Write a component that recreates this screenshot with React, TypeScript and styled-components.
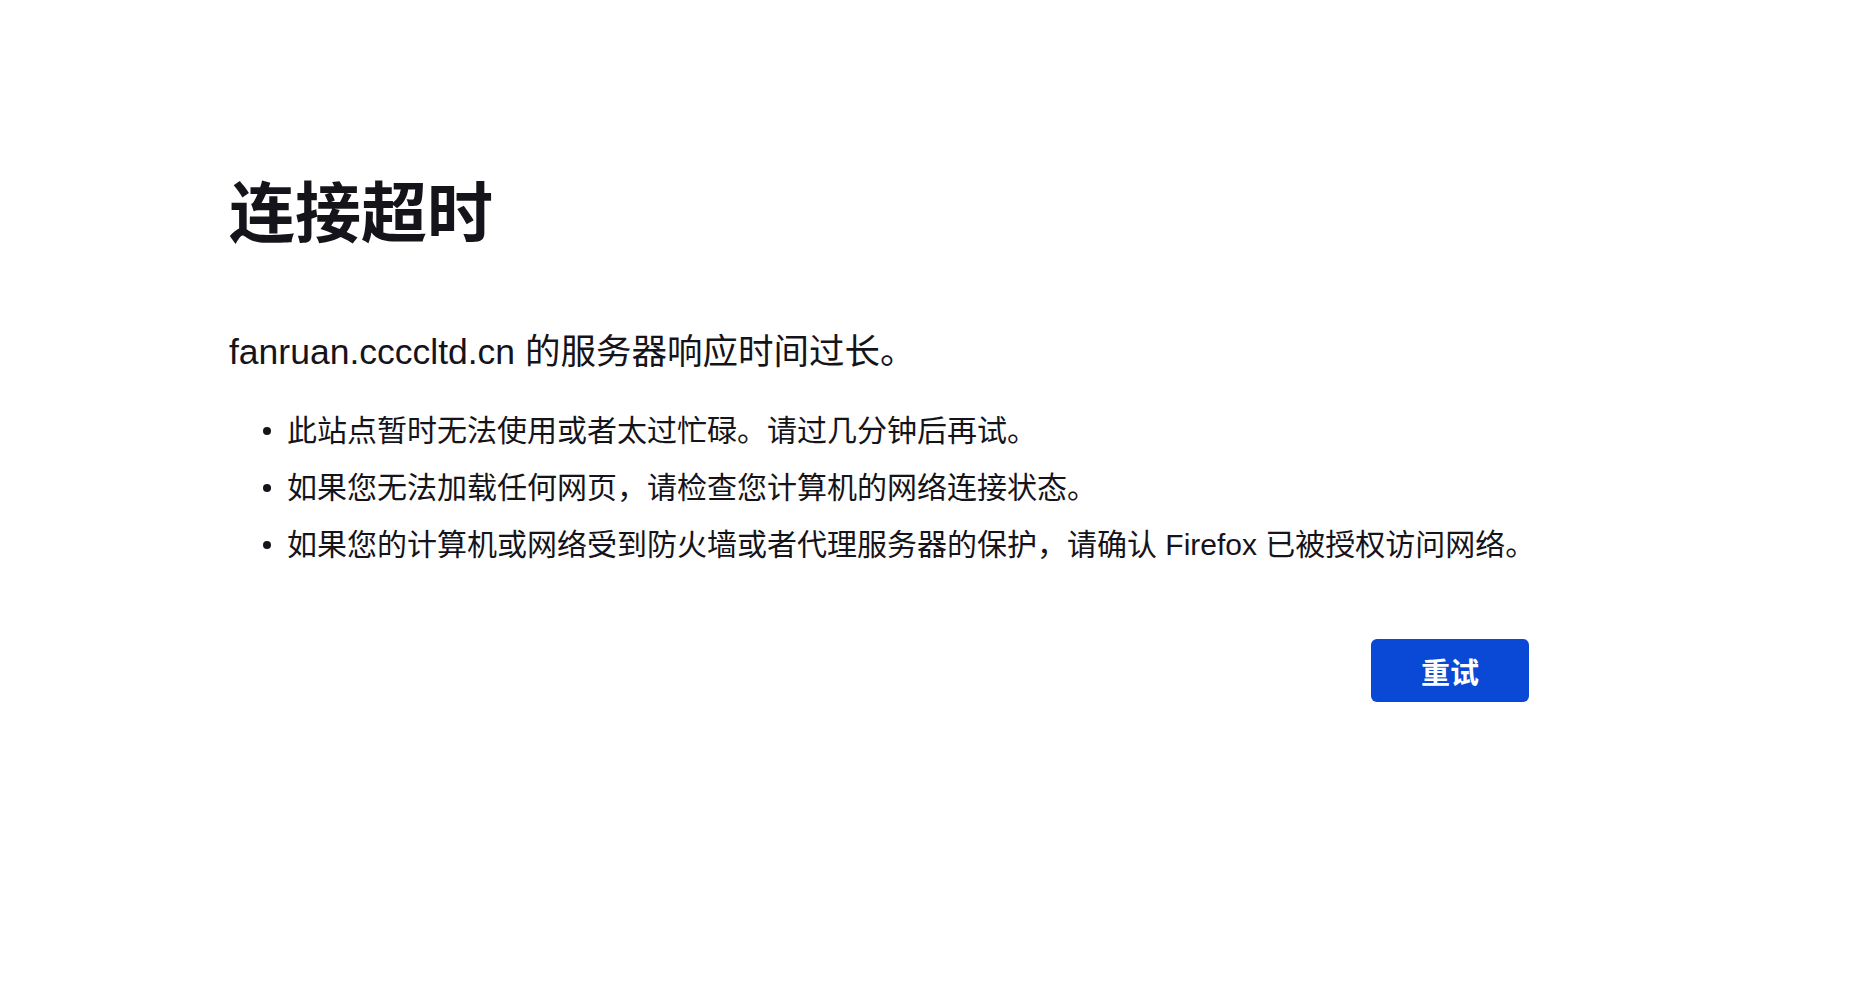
import styled, { createGlobalStyle } from "styled-components";

const GlobalStyle = createGlobalStyle`
  html, body {
    margin: 0;
    padding: 0;
    background: #ffffff;
  }

  body {
    font-family: "Liberation Sans", "Noto Sans CJK SC", sans-serif;
    color: #15141a;
  }
`;

const Page = styled.div`
  min-height: 100vh;
  box-sizing: border-box;
  padding: 174px 0 0 229px;
`;

const Container = styled.div`
  width: 1300px;
  display: flex;
  flex-direction: column;
`;

const Title = styled.h1`
  margin: 0;
  font-size: 66px;
  line-height: 80px;
  font-weight: 700;
  color: #15141a;
`;

const Intro = styled.p`
  margin: 74px 0 0;
  font-size: 35.5px;
  line-height: 48px;
  font-weight: 400;
`;

const ReasonList = styled.ul`
  list-style: none;
  margin: 34px 0 0;
  padding: 0 0 0 34px;
  display: flex;
  flex-direction: column;
  gap: 15px;
`;

const Reason = styled.li`
  display: flex;
  align-items: center;
  gap: 16px;
  font-size: 30px;
  line-height: 42px;
  white-space: nowrap;

  &::before {
    content: "";
    flex: none;
    width: 8px;
    height: 8px;
    border-radius: 50%;
    background: #15141a;
  }
`;

const ButtonRow = styled.div`
  display: flex;
  justify-content: flex-end;
  margin-top: 73px;
`;

const RetryButton = styled.button`
  width: 158px;
  height: 63px;
  border: none;
  border-radius: 6px;
  background: #0a48d6;
  color: #ffffff;
  font-family: "Liberation Sans", "Noto Sans CJK SC", sans-serif;
  font-size: 29px;
  font-weight: 700;
  cursor: pointer;
  padding: 0;

  &:hover {
    background: #0639b3;
  }
`;

const reasons = [
  "此站点暂时无法使用或者太过忙碌。请过几分钟后再试。",
  "如果您无法加载任何网页，请检查您计算机的网络连接状态。",
  "如果您的计算机或网络受到防火墙或者代理服务器的保护，请确认 Firefox 已被授权访问网络。",
];

export default function App() {
  return (
    <>
      <GlobalStyle />
      <Page>
        <Container>
          <Title>连接超时</Title>
          <Intro>fanruan.ccccltd.cn 的服务器响应时间过长。</Intro>
          <ReasonList>
            {reasons.map((text) => (
              <Reason key={text}>{text}</Reason>
            ))}
          </ReasonList>
          <ButtonRow>
            <RetryButton>重试</RetryButton>
          </ButtonRow>
        </Container>
      </Page>
    </>
  );
}
